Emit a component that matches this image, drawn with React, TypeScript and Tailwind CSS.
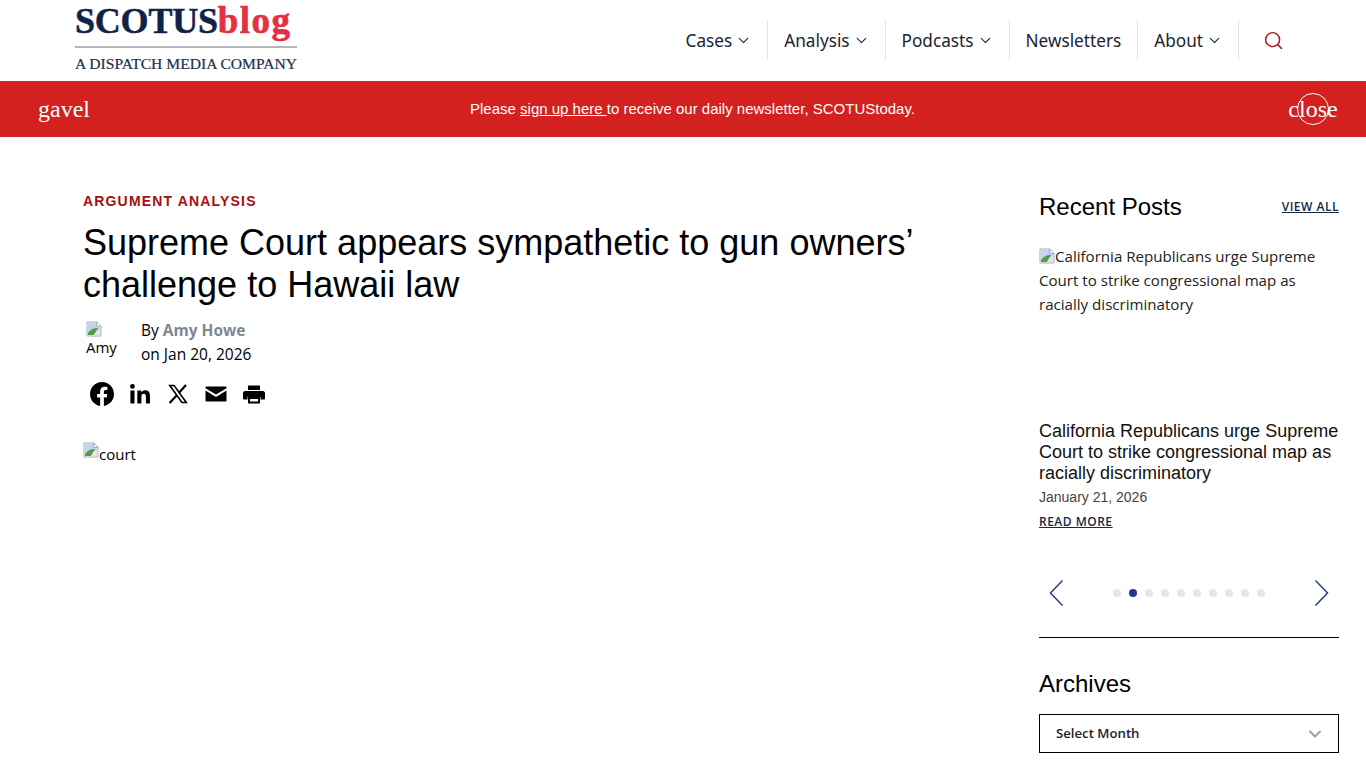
import { ChevronDown, Search } from "lucide-react";

const nav = [
  { label: "Cases", caret: true },
  { label: "Analysis", caret: true },
  { label: "Podcasts", caret: true },
  { label: "Newsletters", caret: false },
  { label: "About", caret: true },
];

function BrokenImage({ className }: { className?: string }) {
  return (
    <svg viewBox="0 0 16 16" width="16" height="16" className={className}>
      <path d="M1 1h10l4 4v10H1z" fill="#fff" stroke="#a9adb6" />
      <path d="M10.500 1v4.500H15" fill="#eef0f3" stroke="#a9adb6" />
      <path d="M2 2h8v4h4v3L2 12z" fill="#c3d3f0" />
      <path d="M2 14v-2c3-4 6-5 10-5l-4 7z" fill="#4f9e3f" />
      <path d="M8 14l5-6 1 .5V14z" fill="#e2e4e8" />
    </svg>
  );
}

function SocialIcons() {
  return (
    <div className="flex items-center gap-[14px] pl-[7px] mt-[15px] text-black">
      <svg viewBox="0 0 24 24" width="24" height="24" fill="currentColor">
        <path d="M24 12.07C24 5.4 18.63 0 12 0S0 5.4 0 12.07c0 6.03 4.39 11.02 10.13 11.93v-8.44H7.08v-3.49h3.05V9.41c0-3.02 1.79-4.7 4.53-4.7 1.31 0 2.68.24 2.68.24v2.97h-1.51c-1.49 0-1.96.93-1.96 1.89v2.26h3.33l-.53 3.49h-2.8V24C19.61 23.09 24 18.1 24 12.07z" />
      </svg>
      <svg viewBox="0 0 24 24" width="24" height="24" fill="currentColor">
        <path d="M6.500 21.500H2.400V8.600h4.100zM4.450 6.800a2.400 2.400 0 1 1 0-4.800 2.400 2.400 0 0 1 0 4.800zM22 21.500h-4.100v-6.300c0-1.500 0-3.400-2.100-3.400s-2.400 1.600-2.400 3.300v6.400H9.300V8.600h3.900v1.800h.1c.55-1 1.900-2.100 3.800-2.100 4.100 0 4.900 2.700 4.900 6.200z" />
      </svg>
      <svg viewBox="0 0 24 24" width="24" height="24" fill="none" stroke="currentColor">
        <path d="M3.800 3.500h4.300l12.200 17h-4.300z" strokeWidth="1.600" />
        <path d="M20 3l-7 7.800M10.600 13.600L3.600 21" strokeWidth="2.200" />
      </svg>
      <svg viewBox="0 0 24 24" width="24" height="24" fill="currentColor">
        <path d="M2.500 4.500h19c.6 0 1 .4 1 1v.8L12 12.600 1.500 6.300v-.8c0-.6.4-1 1-1zM1.500 8.600L12 15l10.500-6.400v10c0 .6-.4 1-1 1h-19c-.6 0-1-.4-1-1z" />
      </svg>
      <svg viewBox="0 0 24 24" width="24" height="24" fill="currentColor">
        <path d="M6 3.500h12V8H6z" />
        <path d="M3 9h18c1 0 2 1 2 2v5.500c0 .8-.7 1-1 1h-3.500V15h-13v2.500H2c-.3 0-1-.2-1-1V11c0-1 1-2 2-2z" />
        <path d="M7 16h10v4.500H7z" fill="none" stroke="currentColor" strokeWidth="2" />
      </svg>
    </div>
  );
}

export default function App() {
  return (
    <div className="min-h-screen h-[768px] overflow-hidden bg-white font-['Open_Sans',sans-serif] text-black">
      <header className="h-[81px] flex items-start justify-between pl-[75px] pr-[58px]">
        <div className="w-[222px]">
          <div className="font-['Liberation_Serif',serif] font-bold text-[36px] leading-[42px] tracking-[-0.2px] text-[#0f2347] whitespace-nowrap [-webkit-text-stroke:0.5px_#0f2347]">
            SCOTUS<span className="text-[#e5303f] text-[37px] tracking-[1.400px] [-webkit-text-stroke:0.6px_#e5303f]">blog</span>
          </div>
          <div className="border-t-[2px] border-[#b4b6bb] mt-[4px] pt-[7px] font-['Liberation_Serif',serif] text-[15.600px] leading-[18px] text-[#20304e] whitespace-nowrap [-webkit-text-stroke:0.2px_#20304e]">
            A DISPATCH MEDIA COMPANY
          </div>
        </div>
        <nav className="flex items-center h-[40px] mt-[20px] text-[#1a2332] text-[17.200px]">
          {nav.map((item) => (
            <div key={item.label} className="flex items-center gap-[3px] h-full px-4 border-r border-[#e3e5e8]">
              <span className="font-['Noto_Sans',sans-serif] leading-none pt-[2px]">{item.label}</span>
              {item.caret && <ChevronDown size={17} strokeWidth={1.500} className="-mr-[1px]" />}
            </div>
          ))}
          <div className="w-[69px] flex justify-center">
            <Search size={21} strokeWidth={1.700} className="text-[#a41c1c]" />
          </div>
        </nav>
      </header>

      <div className="relative h-[56px] bg-[#d2211e] text-white flex items-center pl-[38px]">
        <span className="font-['Liberation_Serif',serif] text-[24px] leading-none w-[432px]">gavel</span>
        <p className="font-['Liberation_Sans',sans-serif] text-[15px] whitespace-nowrap">
          Please <a className="underline">sign up here </a>to receive our daily newsletter, SCOTUStoday.
        </p>
        <div className="absolute left-[1289px] top-[12px] w-[48px] h-[32px] flex items-center justify-center font-['Liberation_Serif',serif] text-[24px] leading-none">
          close
          <span className="absolute left-[8px] top-0 w-[32px] h-[32px] rounded-full border border-white" />
        </div>
      </div>

      <main className="flex pl-[83px] pr-[27px] pt-[56px]">
        <article className="w-[956px] pr-[60px]">
          <div className="font-['Liberation_Sans',sans-serif] font-bold text-[14px] leading-[17px] tracking-[1.170px] text-[#a50f0f]">
            ARGUMENT ANALYSIS
          </div>
          <h1 className="font-['Liberation_Sans',sans-serif] font-normal text-[36px] leading-[42px] mt-[12px]">
            Supreme Court appears sympathetic to gun owners’ challenge to Hawaii law
          </h1>
          <div className="flex h-[47px] mt-[14px]">
            <div className="w-[58px] pl-[3px] text-[15px] leading-[20px] pt-[1px]">
              <BrokenImage />
              <div>Amy</div>
            </div>
            <div className="text-[15.500px] leading-[23.500px] mt-[-1px]">
              <div>
                By <span className="font-bold text-[#7d8792]">Amy Howe</span>
              </div>
              <div>on Jan 20, 2026</div>
            </div>
          </div>
          <SocialIcons />
          <div className="flex items-start mt-[36px] text-[15px] leading-[20px]">
            <BrokenImage />
            <span className="mt-[2px]">court</span>
          </div>
        </article>

        <aside className="w-[300px]">
          <div className="flex items-center justify-between">
            <h2 className="font-['Liberation_Sans',sans-serif] text-[24px] leading-[28px]">Recent Posts</h2>
            <a className="text-[12px] font-semibold underline tracking-[0.500px] text-[#12284c]">VIEW ALL</a>
          </div>
          <div className="h-[176px] mt-[23px] text-[15.100px] leading-[24px] text-[#222]">
            <BrokenImage className="inline-block align-[-2px]" />
            California Republicans urge Supreme Court to strike congressional map as racially discriminatory
          </div>
          <h3 className="font-['Liberation_Sans',sans-serif] text-[18px] leading-[21px] text-[#111] mt-[1px]">
            California Republicans urge Supreme Court to strike congressional map as racially discriminatory
          </h3>
          <div className="font-['Liberation_Sans',sans-serif] text-[14px] leading-[16px] text-[#444] mt-[5px]">January 21, 2026</div>
          <a className="block text-[12px] font-semibold underline tracking-[0.500px] text-[#12284c] mt-[8px]">READ MORE</a>

          <div className="flex items-center justify-between h-[34px] mt-[45px] px-[10px] text-[#27417f]">
            <svg viewBox="0 0 15 28" width="15" height="28" fill="none" stroke="currentColor" strokeWidth="1.500">
              <path d="M13.500 1.500L1.500 14l12 12.500" />
            </svg>
            <div className="flex gap-[8px] ml-[-1px]">
              {[0, 1, 2, 3, 4, 5, 6, 7, 8, 9].map((i) => (
                <span key={i} className={i === 1 ? "w-2 h-2 rounded-full bg-[#1e3a8a]" : "w-2 h-2 rounded-full bg-[#e5e7eb]"} />
              ))}
            </div>
            <svg viewBox="0 0 15 28" width="15" height="28" fill="none" stroke="currentColor" strokeWidth="1.500">
              <path d="M1.500 1.500L13.500 14l-12 12.500" />
            </svg>
          </div>

          <div className="border-t border-black mt-[27px]" />
          <h2 className="font-['Liberation_Sans',sans-serif] text-[24px] leading-[28px] mt-[32px]">Archives</h2>
          <div className="flex items-center justify-between h-[39px] mt-[16px] border border-black pl-4 pr-[13px] text-[13.200px] font-semibold text-[#1a2332]">
            <span className="pt-[1px]">Select Month</span>
            <ChevronDown size={20} strokeWidth={2.500} className="text-[#a0a0a0]" />
          </div>
        </aside>
      </main>
    </div>
  );
}
